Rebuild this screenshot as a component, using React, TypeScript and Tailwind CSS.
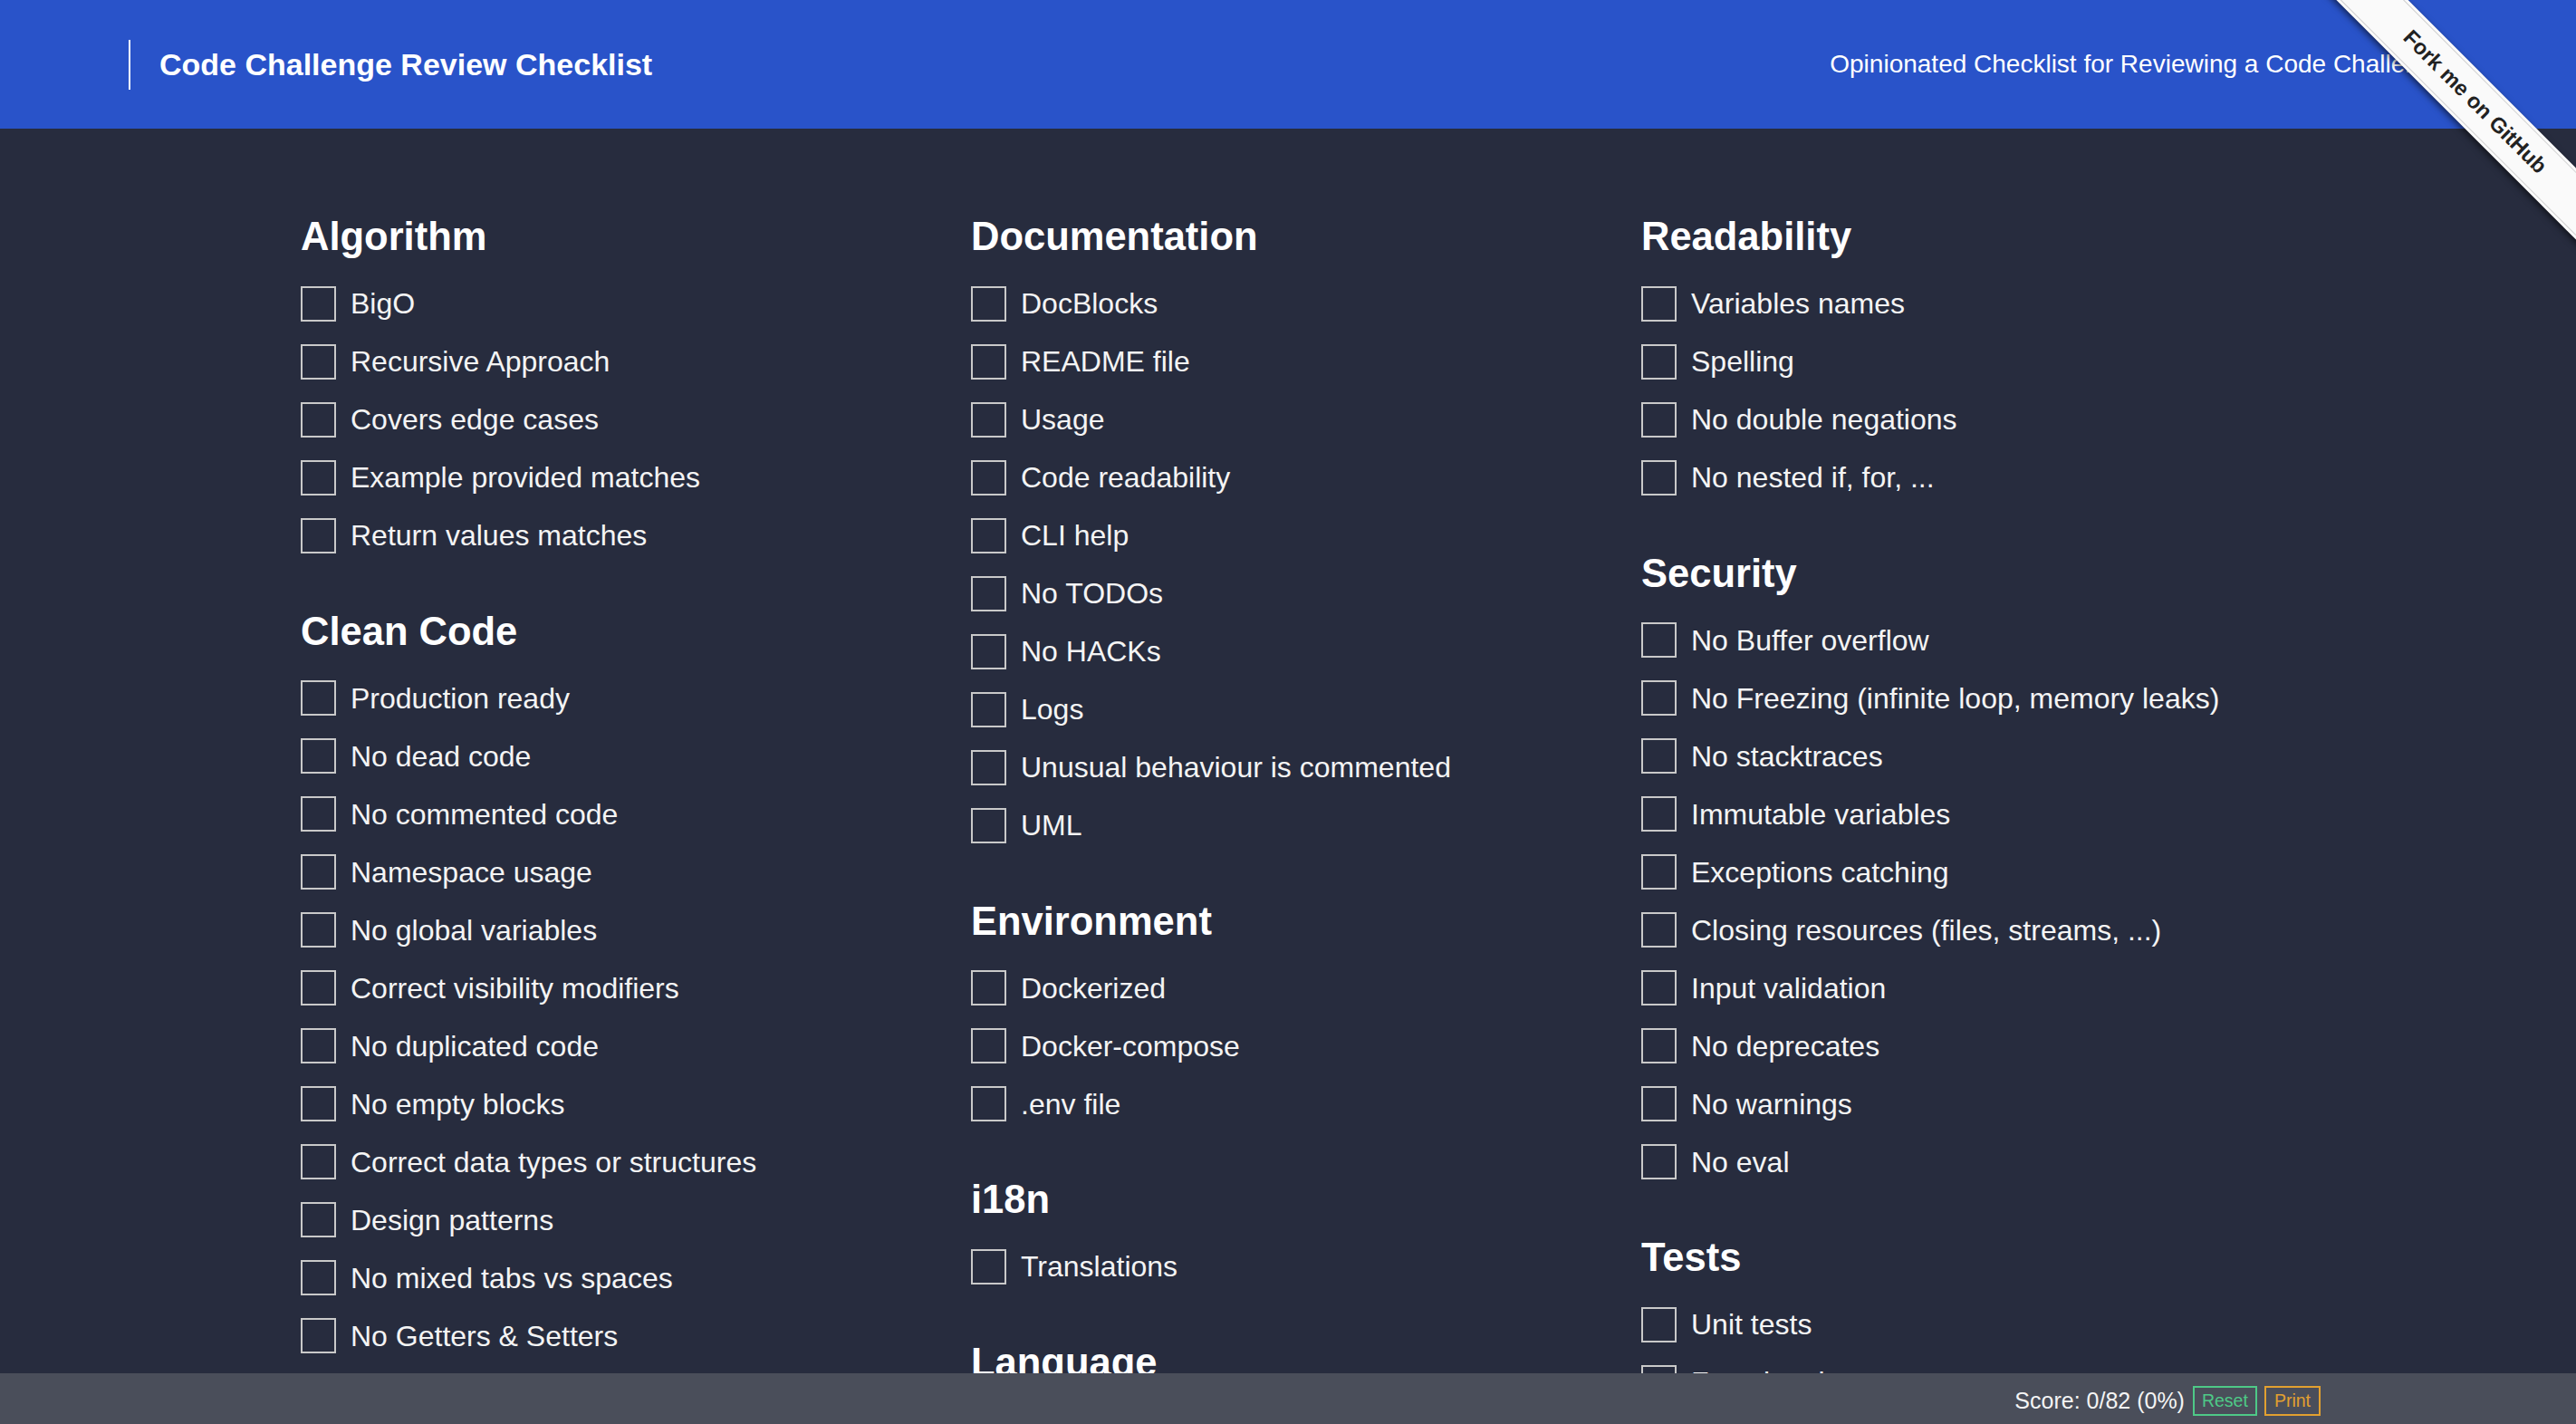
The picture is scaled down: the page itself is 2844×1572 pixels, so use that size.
import React from 'react';

type Section = {
  title: string;
  items: string[];
};

const columns: Section[][] = [
  [
    {
      title: 'Algorithm',
      items: ['BigO', 'Recursive Approach', 'Covers edge cases', 'Example provided matches', 'Return values matches'],
    },
    {
      title: 'Clean Code',
      items: [
        'Production ready',
        'No dead code',
        'No commented code',
        'Namespace usage',
        'No global variables',
        'Correct visibility modifiers',
        'No duplicated code',
        'No empty blocks',
        'Correct data types or structures',
        'Design patterns',
        'No mixed tabs vs spaces',
        'No Getters & Setters',
        'Small functions',
        'SOLID principles',
      ],
    },
  ],
  [
    {
      title: 'Documentation',
      items: [
        'DocBlocks',
        'README file',
        'Usage',
        'Code readability',
        'CLI help',
        'No TODOs',
        'No HACKs',
        'Logs',
        'Unusual behaviour is commented',
        'UML',
      ],
    },
    {
      title: 'Environment',
      items: ['Dockerized', 'Docker-compose', '.env file'],
    },
    {
      title: 'i18n',
      items: ['Translations'],
    },
    {
      title: 'Language',
      items: ['Latest version', 'Language features'],
    },
  ],
  [
    {
      title: 'Readability',
      items: ['Variables names', 'Spelling', 'No double negations', 'No nested if, for, ...'],
    },
    {
      title: 'Security',
      items: [
        'No Buffer overflow',
        'No Freezing (infinite loop, memory leaks)',
        'No stacktraces',
        'Immutable variables',
        'Exceptions catching',
        'Closing resources (files, streams, ...)',
        'Input validation',
        'No deprecates',
        'No warnings',
        'No eval',
      ],
    },
    {
      title: 'Tests',
      items: ['Unit tests', 'Functional tests', 'Code coverage'],
    },
  ],
];

// bande "Fork me on GitHub" en haut à droite
function ForkRibbon() {
  return (
    <div className="absolute top-0 right-0 w-[285px] h-[285px] overflow-hidden z-20 pointer-events-none">
      <div className="absolute left-[-27px] top-[85px] w-[400px] h-[56px] rotate-45 bg-[#fafafa] shadow-[0_3px_7px_rgba(0,0,0,0.55)] flex items-center justify-center">
        <div className="absolute inset-x-0 top-[3px] bottom-[3px] border-y border-[#cfcfcf]" />
        <span className="relative text-[23.6px] font-bold text-[#222] leading-none">Fork me on GitHub</span>
      </div>
    </div>
  );
}

function CheckItem({ label }: { label: string }) {
  return (
    <li className="h-16 flex items-center">
      <span className="w-[39px] h-[39px] border-2 border-[#c9c9c9] flex-shrink-0" />
      <span className="ml-[16px] text-[32px] text-[#f4f4f4] whitespace-nowrap">{label}</span>
    </li>
  );
}

export default function App() {
  return (
    <div className="relative h-screen overflow-hidden bg-[#272c3e] text-white" style={{ fontFamily: '"Liberation Sans", Arial, sans-serif' }}>
      <header className="h-[142px] bg-[#2953c9] flex items-center justify-between px-[142px]">
        <div className="h-[55px] border-l-2 border-white pl-[32px] flex items-center">
          <h1 className="text-[34px] font-bold leading-none">Code Challenge Review Checklist</h1>
        </div>
        <p className="text-[28px] leading-none">Opinionated Checklist for Reviewing a Code Challenge</p>
      </header>

      <ForkRibbon />

      <main className="pt-[98px] pl-[332px] grid grid-cols-[740px_740px_740px]">
        {columns.map((sections, ci) => (
          <div key={ci} className="flex flex-col gap-[52.5px]">
            {sections.map((section) => (
              <section key={section.title}>
                <h2 className="text-[43.5px] font-bold leading-none">{section.title}</h2>
                <ul className="mt-[19.5px]">
                  {section.items.map((item) => (
                    <CheckItem key={item} label={item} />
                  ))}
                </ul>
              </section>
            ))}
          </div>
        ))}
      </main>

      <footer className="fixed bottom-0 inset-x-0 h-[56px] bg-[#4a4e5a] flex items-center justify-end pr-[282px] pt-[5px]">
        <span className="text-[25px] text-[#f4f4f4]">Score: 0/82 (0%)</span>
        <button className="ml-[9px] h-[33px] px-[8px] border-2 border-[#4ec987] text-[#4ec987] text-[19.5px] leading-none">
          Reset
        </button>
        <button className="ml-[8px] h-[33px] px-[9px] border-2 border-[#e2a030] text-[#e2a030] text-[19.5px] leading-none">
          Print
        </button>
      </footer>
    </div>
  );
}
